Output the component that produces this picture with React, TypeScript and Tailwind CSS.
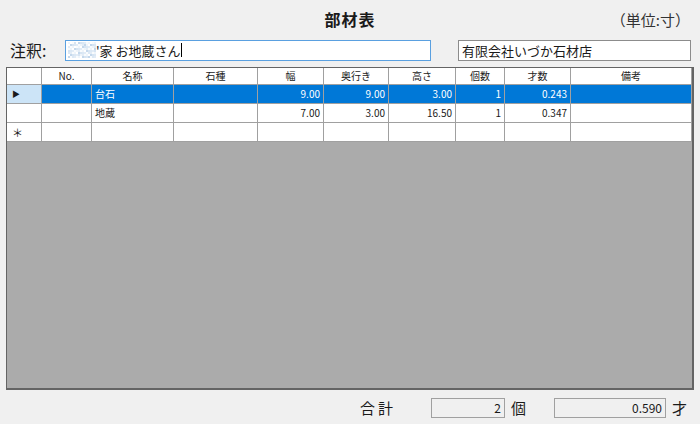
import React from 'react'

const font = { fontFamily: '"Noto Sans CJK JP", "Noto Sans", sans-serif' }

const cols = [
  { key: 'rh', label: '', w: 'w-[35px]' },
  { key: 'no', label: 'No.', w: 'w-[50px]' },
  { key: 'name', label: '名称', w: 'w-[82px]' },
  { key: 'stone', label: '石種', w: 'w-[84px]' },
  { key: 'width', label: '幅', w: 'w-[66px]' },
  { key: 'depth', label: '奥行き', w: 'w-[65px]' },
  { key: 'height', label: '高さ', w: 'w-[67px]' },
  { key: 'qty', label: '個数', w: 'w-[49px]' },
  { key: 'sai', label: '才数', w: 'w-[66px]' },
  { key: 'note', label: '備考', w: 'flex-1' },
]

const rows = [
  { name: '台石', width: '9.00', depth: '9.00', height: '3.00', qty: '1', sai: '0.243', selected: true },
  { name: '地蔵', width: '7.00', depth: '3.00', height: '16.50', qty: '1', sai: '0.347', selected: false },
]

const numeric = ['width', 'depth', 'height', 'qty', 'sai']

// pixelated blur patch at the start of the annotation field
function Blur() {
  const cells: React.ReactNode[] = []
  const shades = ['#eef4fa', '#d6e4f2', '#f8fbfd', '#c4d8ec', '#e2ecf6', '#ffffff', '#dbe8f5']
  for (let y = 0; y < 8; y++) {
    for (let x = 0; x < 14; x++) {
      const h = ((x * 2654435761 + y * 40503) >>> 0) % 97
      const s = shades[h % shades.length]
      cells.push(<rect key={`${x}-${y}`} x={x * 2} y={y * 2} width="2" height="2" fill={s} />)
    }
  }
  return (
    <svg width="28" height="16" className="shrink-0">
      {cells}
    </svg>
  )
}

export default function App() {
  return (
    <div className="w-[700px] h-[424px] bg-[#f0f0f0] text-[#1a1a1a] flex flex-col" style={font}>
      {/* title */}
      <div className="relative h-[38px] flex items-center justify-center">
        <span className="text-[16px] font-bold tracking-[1px]">部材表</span>
        <span className="absolute right-[10px] top-[9px] text-[15px] text-[#333]">（単位:寸）</span>
      </div>

      {/* annotation */}
      <div className="h-[22px] mt-[1px] flex items-center">
        <span className="ml-[10px] w-[55px] text-[16px] leading-none">注釈:</span>
        <div className="w-[366px] h-[21px] bg-white border border-[#5aa0e0] flex items-center pl-[2px] text-[13px] leading-none">
          <Blur />
          <span>'家 お地蔵さん</span>
          <span className="w-[1px] h-[14px] bg-black" />
        </div>
        <div className="ml-[27px] w-[233px] h-[21px] bg-white border border-[#8c8c8c] flex items-center pl-[3px] text-[13px] leading-none">
          有限会社いづか石材店
        </div>
      </div>

      {/* grid */}
      <div className="mt-[6px] mx-[6px] h-[323px] bg-[#ababab] border border-[#646464] border-r-[2px] border-b-[2px] flex flex-col text-[10px] leading-none">
        <div className="h-[17px] flex bg-white border-b border-[#a0a0a0]">
          {cols.map((c) => (
            <div key={c.key} className={`${c.w} shrink-0 border-r border-[#a0a0a0] flex items-center justify-center`}>
              {c.label}
            </div>
          ))}
        </div>
        {rows.map((r, i) => (
          <div key={i} className="h-[19px] flex border-b border-[#a0a0a0]">
            {cols.map((c) => {
              if (c.key === 'rh') {
                return (
                  <div
                    key={c.key}
                    className={`${c.w} shrink-0 border-r border-[#a0a0a0] flex items-center pl-[5px] ${r.selected ? 'bg-[#cce4f7]' : 'bg-white'}`}
                  >
                    {r.selected && <span className="text-[8px]">▶</span>}
                  </div>
                )
              }
              const v = (r as Record<string, string | boolean>)[c.key]
              const isNum = numeric.includes(c.key)
              return (
                <div
                  key={c.key}
                  className={`${c.w} shrink-0 border-r border-[#a0a0a0] flex items-center px-[3px] ${
                    isNum ? 'justify-end' : 'justify-start'
                  } ${r.selected ? 'bg-[#0078d7] text-white' : 'bg-white'}`}
                >
                  {typeof v === 'string' ? v : ''}
                </div>
              )
            })}
          </div>
        ))}
        <div className="h-[19px] flex border-b border-[#a0a0a0] bg-white">
          {cols.map((c) => (
            <div key={c.key} className={`${c.w} shrink-0 border-r border-[#a0a0a0] flex items-center pl-[5px]`}>
              {c.key === 'rh' ? <span className="text-[11px]">＊</span> : ''}
            </div>
          ))}
        </div>
      </div>

      {/* totals */}
      <div className="mt-[8px] h-[20px] flex items-center text-[15px]">
        <span className="ml-[360px] w-[71px] tracking-[3px]">合計</span>
        <div className="w-[74px] h-[20px] border border-[#a0a0a0] bg-[#f0f0f0] flex items-center justify-end pr-[3px] text-[12px]">
          2
        </div>
        <span className="ml-[6px] w-[43px]">個</span>
        <div className="w-[112px] h-[20px] border border-[#a0a0a0] bg-[#f0f0f0] flex items-center justify-end pr-[3px] text-[12px]">
          0.590
        </div>
        <span className="ml-[6px]">才</span>
      </div>
    </div>
  )
}
